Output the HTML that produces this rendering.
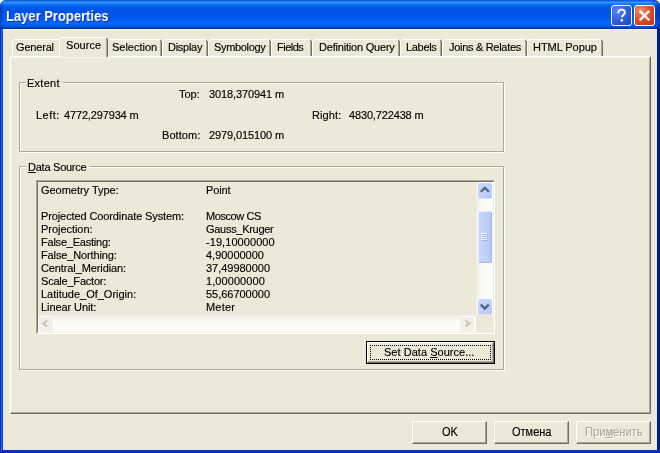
<!DOCTYPE html>
<html><head><meta charset="utf-8">
<style>
html,body{margin:0;padding:0;}
body{width:660px;height:453px;overflow:hidden;background:#fff;font-family:"Liberation Sans",sans-serif;font-size:11px;color:#000;position:relative;}
#win{position:absolute;left:0;top:0;width:660px;height:453px;border-radius:6px 6px 0 0;overflow:hidden;background:linear-gradient(to right,#0030d8 0px,#0030d8 1px,#2a62ea 1px,#2a62ea 2px,#1a47b8 2px,#1a47b8 3px,#0a35d6 3px,#0a35d6 656px,#0a2298 657px,#061a90 658px,#04168c 660px);}
#bot{position:absolute;left:0;top:450px;width:660px;height:3px;background:linear-gradient(to bottom,#0a35d6 0px,#0a33d0 1px,#0a2bb8 2px,#001c98 3px);}
#title{position:absolute;left:0;top:0;width:660px;height:29px;background:linear-gradient(to bottom,#0a50d4 0px,#1565ea 1px,#3593ff 2px,#2a8eff 3px,#127dff 4px,#036ffc 5px,#0262ee 6px,#0057e5 8px,#0054e3 10px,#0055eb 16px,#005bf5 19px,#026afe 22px,#0062ef 25px,#0052d6 27px,#0040ab 28px,#003092 29px);}
#tshade{position:absolute;left:0;top:0;width:660px;height:29px;background:linear-gradient(to right,rgba(0,20,120,.35) 0px,rgba(0,20,120,0) 4px,rgba(0,20,120,0) 650px,rgba(0,20,120,.45) 660px);}
#ttext{position:absolute;left:6.1px;top:8px;font-weight:bold;font-size:14px;color:#fff;text-shadow:1px 1px 0 #0f2a9a;white-space:nowrap;line-height:16px;transform:scaleX(.927);transform-origin:0 0;}
#client{position:absolute;left:3px;top:29px;width:654px;height:421px;background:#ece9d8;border:1px solid #d9ecfd;border-top-color:#f6f5ee;box-sizing:border-box;}
.tb{position:absolute;top:5px;width:21px;height:21px;border-radius:3px;border:1px solid #fff;box-sizing:border-box;overflow:hidden;}
#help{left:611px;background:radial-gradient(circle at 30% 25%,#5c8cf8 0%,#3162e4 45%,#1d42bc 100%);}
#close{left:634px;background:radial-gradient(circle at 30% 25%,#ee9474 0%,#e0502a 45%,#c0340c 100%);}
.tb svg{position:absolute;left:0;top:0;}
.t{position:absolute;white-space:nowrap;line-height:13px;z-index:5;}
/* tabs */
.tab{position:absolute;top:39px;height:17px;}
.tab i{position:absolute;display:block;}
.tab .l{left:0;top:2px;bottom:0;width:1px;background:#fff;}
.tab .tp{left:2px;right:2px;top:0;height:1px;background:#fff;}
.tab .c1{left:1px;top:1px;width:1px;height:1px;background:#fff;}
.tab .r1{right:1px;top:2px;bottom:0;width:1px;background:#aca899;}
.tab .r2{right:0;top:2px;bottom:0;width:1px;background:#716f64;}
.tab .c2{right:1px;top:1px;width:1px;height:1px;background:#716f64;}
.tab.sel{top:37px;height:20px;background:#ece9d8;z-index:3;}
#pane{position:absolute;left:10px;top:56px;width:641px;height:358px;box-sizing:border-box;border-left:1px solid #fff;border-top:1px solid #fff;border-right:1px solid #716f64;border-bottom:1px solid #716f64;}
#pane:after{content:"";position:absolute;left:0;top:0;right:0;bottom:0;border-right:1px solid #aca899;border-bottom:1px solid #aca899;border-top:1px solid #f5f3ea;}
#pane:before{content:"";position:absolute;left:-2px;top:0;bottom:0;width:1px;background:rgba(255,255,255,.45);}
.grp{position:absolute;box-sizing:border-box;border:1px solid #aca899;box-shadow:1px 1px 0 #fff, inset 1px 1px 0 #fff;}
.gl{position:absolute;background:#ece9d8;height:4px;}
.btn{position:absolute;box-sizing:border-box;height:23px;border-left:1px solid #fff;border-top:1px solid #fff;border-right:1px solid #716f64;border-bottom:1px solid #716f64;}
.btn:after{content:"";position:absolute;left:0;top:0;right:0;bottom:0;border-right:1px solid #aca899;border-bottom:1px solid #aca899;}
.bt{position:absolute;white-space:nowrap;line-height:15px;font-size:12.5px;transform-origin:0 0;z-index:5;}
/* listbox */
#lb{position:absolute;left:36px;top:180px;width:459px;height:154px;box-sizing:border-box;border:1px solid;border-color:#aca899 #fff #fff #aca899;}
#lb:after{content:"";position:absolute;left:0;top:0;right:0;bottom:0;border:1px solid;border-color:#716f64 #f1efe2 #f1efe2 #716f64;pointer-events:none;}
#vsb{position:absolute;left:476px;top:182px;width:17px;height:133px;background:linear-gradient(to right,#eeede5 0,#f3f1ec 2px,#fbfaf7 6px,#fefefb 100%);}
#hsb{position:absolute;left:38px;top:315px;width:438px;height:17px;background:linear-gradient(to bottom,#eeede5 0,#f3f1ec 2px,#fbfaf7 6px,#fefefb 100%);}
#corner{position:absolute;left:476px;top:315px;width:17px;height:17px;background:#ece9d8;}
.sbtn{position:absolute;width:14px;height:15px;border-radius:2px;background:linear-gradient(135deg,#cddafb 0%,#c1d0f8 55%,#b4c5f3 100%);box-shadow:0 0 0 1px rgba(255,255,255,.6),0 1px 0 0 #9fb0dc;}
.sbtn.dis{background:#f1efe8;box-shadow:0 0 0 1px rgba(255,255,255,.7),0 1px 0 0 #e2e0d4;}
.sbtn svg{position:absolute;left:0;top:0;}
#thumb{position:absolute;left:478px;top:211px;width:14px;height:52px;box-sizing:border-box;border-radius:2px;border:1px solid;border-color:#e4ebfe #a3b6ea #a3b6ea #e4ebfe;background:linear-gradient(to right,#c8d6fb 0%,#c1d0f8 50%,#b7c8f5 100%);box-shadow:0 0 0 1px rgba(255,255,255,.5);}
#sds{position:absolute;left:366px;top:341px;width:129px;height:23px;box-sizing:border-box;border:1px solid #000;}
#sds .in{position:absolute;left:0;top:0;right:0;bottom:0;border-left:1px solid #fff;border-top:1px solid #fff;border-right:1px solid #716f64;border-bottom:1px solid #716f64;}
#sds .in:after{content:"";position:absolute;left:0;top:0;right:0;bottom:0;border-right:1px solid #aca899;border-bottom:1px solid #aca899;}
#sds .fc{position:absolute;left:3px;top:3px;right:3px;bottom:3px;border:1px dotted #000;}
.t,.bt{-webkit-text-stroke:0.15px;}
#tx{position:absolute;left:0;top:0;width:660px;height:453px;will-change:transform;z-index:6;}
#ttext{will-change:transform;}
</style></head><body>
<div id="win">
<div id="title"></div><div id="tshade"></div>
<div id="ttext">Layer Properties</div>
<div id="help" class="tb"><svg width="19" height="19" viewBox="0 0 19 19"><path d="M6.2 7.2 C6.2 4.6 8 3.6 9.6 3.6 C11.4 3.6 12.9 4.7 12.9 6.5 C12.9 8.6 10.3 8.9 9.9 11.4" fill="none" stroke="#fff" stroke-width="1.9" stroke-linecap="butt"/><rect x="8.7" y="13.2" width="2.2" height="2.3" fill="#fff"/></svg></div>
<div id="close" class="tb"><svg width="19" height="19" viewBox="0 0 19 19"><path d="M4.7 4.9 L14.3 14.3 M14.3 4.9 L4.7 14.3" stroke="#fff" stroke-width="2.3" stroke-linecap="butt"/></svg></div>
<div id="client"></div>
<div id="bot"></div>

<div id="pane"></div>
<div class="tab" style="left:12px;width:49px"><i class="l"></i><i class="tp"></i><i class="c1"></i></div>
<div class="tab" style="left:108px;width:54px"><i class="tp"></i><i class="r1"></i><i class="r2"></i><i class="c2"></i></div>
<div class="tab sel" style="left:59px;width:49px"><i class="l"></i><i class="tp"></i><i class="c1"></i><i class="r1"></i><i class="r2"></i><i class="c2"></i></div>
<div class="tab" style="left:162px;width:46px"><i class="l"></i><i class="tp"></i><i class="c1"></i><i class="r1"></i><i class="r2"></i><i class="c2"></i></div>
<div class="tab" style="left:208px;width:63px"><i class="l"></i><i class="tp"></i><i class="c1"></i><i class="r1"></i><i class="r2"></i><i class="c2"></i></div>
<div class="tab" style="left:271px;width:41px"><i class="l"></i><i class="tp"></i><i class="c1"></i><i class="r1"></i><i class="r2"></i><i class="c2"></i></div>
<div class="tab" style="left:312px;width:88px"><i class="l"></i><i class="tp"></i><i class="c1"></i><i class="r1"></i><i class="r2"></i><i class="c2"></i></div>
<div class="tab" style="left:400px;width:42px"><i class="l"></i><i class="tp"></i><i class="c1"></i><i class="r1"></i><i class="r2"></i><i class="c2"></i></div>
<div class="tab" style="left:442px;width:85px"><i class="l"></i><i class="tp"></i><i class="c1"></i><i class="r1"></i><i class="r2"></i><i class="c2"></i></div>
<div class="tab" style="left:527px;width:76px"><i class="l"></i><i class="tp"></i><i class="c1"></i><i class="r1"></i><i class="r2"></i><i class="c2"></i></div>

<div class="grp" style="left:19px;top:82px;width:485px;height:70px"></div>
<div class="gl" style="left:26px;top:81px;width:37px"></div>
<div class="grp" style="left:19px;top:166px;width:485px;height:204px"></div>
<div class="gl" style="left:26px;top:165px;width:63px"></div>

<div id="lb"></div>
<div id="vsb"></div><div id="hsb"></div><div id="corner"></div>
<div class="sbtn" style="left:478px;top:183px"><svg width="14" height="15" viewBox="0 0 14 15"><path d="M2.8 8.8 L6.8 4.8 L10.8 8.8" fill="none" stroke="#4d6185" stroke-width="2.3"/></svg></div>
<div class="sbtn" style="left:478px;top:299px"><svg width="14" height="15" viewBox="0 0 14 15"><path d="M2.8 5.6 L6.8 9.6 L10.8 5.6" fill="none" stroke="#4d6185" stroke-width="2.3"/></svg></div>
<div id="thumb"><svg width="12" height="50" viewBox="0 0 12 50" style="position:absolute;left:0;top:0"><path d="M2 21.5h6M2 23.5h6M2 25.5h6M2 27.5h6" stroke="#f2f6ff" stroke-width="1"/><path d="M3 22.5h6M3 24.5h6M3 26.5h6M3 28.5h6" stroke="#8ca1d8" stroke-width="1" opacity=".55"/></svg></div>
<div class="sbtn dis" style="left:39px;top:317px;height:14px"><svg width="14" height="14" viewBox="0 0 14 14"><path d="M8.2 3.5 L4.4 6.5 L8.2 9.5" fill="none" stroke="#c6c3b6" stroke-width="2"/></svg></div>
<div class="sbtn dis" style="left:460px;top:317px;height:14px"><svg width="14" height="14" viewBox="0 0 14 14"><path d="M5.4 3.5 L9.4 6.5 L5.4 9.5" fill="none" stroke="#c6c3b6" stroke-width="2"/></svg></div>

<div id="sds"><div class="in"></div><div class="fc"></div></div>

<div class="btn" style="left:412px;top:421px;width:75px"></div>
<div class="btn" style="left:494px;top:421px;width:75px"></div>
<div class="btn" style="left:576px;top:421px;width:75px"></div>
<div id="tx">
<div class="t" style="left:16px;top:41px;letter-spacing:-0.18px">General</div>
<div class="t" style="left:66px;top:39px;letter-spacing:0.04px">Source</div>
<div class="t" style="left:112px;top:41px;letter-spacing:-0.02px">Selection</div>
<div class="t" style="left:168px;top:41px;letter-spacing:-0.27px">Display</div>
<div class="t" style="left:214px;top:41px;letter-spacing:-0.34px">Symbology</div>
<div class="t" style="left:277px;top:41px;letter-spacing:-0.50px">Fields</div>
<div class="t" style="left:319px;top:41px;letter-spacing:-0.20px">Definition Query</div>
<div class="t" style="left:406px;top:41px;letter-spacing:-0.32px">Labels</div>
<div class="t" style="left:449px;top:41px;letter-spacing:-0.30px">Joins &amp; Relates</div>
<div class="t" style="left:533px;top:41px;letter-spacing:-0.06px">HTML Popup</div>
<div class="t" style="left:27px;top:77px;letter-spacing:0.25px">Extent</div>
<div class="t" style="left:179px;top:88px;letter-spacing:-0.06px">Top:</div>
<div class="t" style="left:209px;top:88px;letter-spacing:-0.10px">3018,370941 m</div>
<div class="t" style="left:36px;top:109px;letter-spacing:0.45px">Left:</div>
<div class="t" style="left:64px;top:109px;letter-spacing:-0.15px">4772,297934 m</div>
<div class="t" style="left:312px;top:109px;letter-spacing:0.11px">Right:</div>
<div class="t" style="left:349px;top:109px;letter-spacing:-0.15px">4830,722438 m</div>
<div class="t" style="left:162px;top:129px;letter-spacing:0.06px">Bottom:</div>
<div class="t" style="left:209px;top:129px;letter-spacing:-0.10px">2979,015100 m</div>
<div class="t" style="left:28px;top:161px;letter-spacing:-0.25px"><u>D</u>ata Source</div>
<div class="t" style="left:41px;top:184px;letter-spacing:-0.03px">Geometry Type:</div>
<div class="t" style="left:41px;top:210px;letter-spacing:-0.11px">Projected Coordinate System:</div>
<div class="t" style="left:41px;top:223px;letter-spacing:-0.04px">Projection:</div>
<div class="t" style="left:41px;top:236px;letter-spacing:-0.22px">False_Easting:</div>
<div class="t" style="left:41px;top:249px;letter-spacing:-0.13px">False_Northing:</div>
<div class="t" style="left:41px;top:262px;letter-spacing:-0.11px">Central_Meridian:</div>
<div class="t" style="left:41px;top:275px;letter-spacing:-0.21px">Scale_Factor:</div>
<div class="t" style="left:41px;top:288px;letter-spacing:-0.01px">Latitude_Of_Origin:</div>
<div class="t" style="left:41px;top:301px;letter-spacing:-0.08px">Linear Unit:</div>
<div class="t" style="left:206px;top:184px;letter-spacing:-0.14px">Point</div>
<div class="t" style="left:206px;top:210px;letter-spacing:-0.43px">Moscow CS</div>
<div class="t" style="left:206px;top:223px;letter-spacing:-0.29px">Gauss_Kruger</div>
<div class="t" style="left:206px;top:236px;letter-spacing:0.07px">-19,10000000</div>
<div class="t" style="left:206px;top:249px;letter-spacing:-0.02px">4,90000000</div>
<div class="t" style="left:206px;top:262px;letter-spacing:-0.02px">37,49980000</div>
<div class="t" style="left:206px;top:275px;letter-spacing:0.08px">1,00000000</div>
<div class="t" style="left:206px;top:288px;letter-spacing:-0.02px">55,66700000</div>
<div class="t" style="left:206px;top:301px;letter-spacing:0.18px">Meter</div>
<div class="t" style="left:384px;top:346px;letter-spacing:0.03px">Set Data <u>S</u>ource...</div>
<div class="bt" style="left:441.6px;top:425px;transform:scaleX(0.882);">OK</div>
<div class="bt" style="left:511.6px;top:425px;transform:scaleX(0.880);">Отмена</div>
<div class="bt" style="left:585.0px;top:425px;transform:scaleX(0.890);color:#aca899;text-shadow:1px 1px 0 #fff;">При<u>м</u>енить</div>
</div>
</div>
</body></html>
